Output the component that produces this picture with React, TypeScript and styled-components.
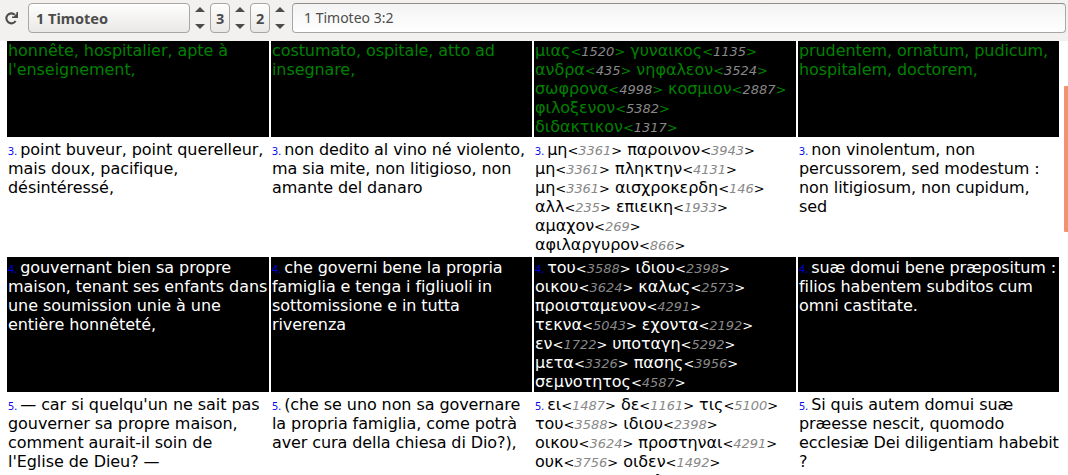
import React from 'react';
import styled, { createGlobalStyle } from 'styled-components';

const Global = createGlobalStyle`
  * { box-sizing: border-box; }
  html, body { margin: 0; height: 100%; overflow: hidden; background: #fff; }
`;

const Page = styled.div`
  height: 100vh;
  display: flex;
  flex-direction: column;
  overflow: hidden;
`;

const Toolbar = styled.header`
  flex: none;
  height: 41px;
  padding: 3px 2px 8px 4px;
  display: flex;
  align-items: stretch;
  background: #f2f1f0;
  color: #4c4c4c;
  font: 14px/28px 'Noto Sans', sans-serif;
`;

const Reload = styled.button`
  width: 16px;
  margin: 0 8px 0 0;
  padding: 0;
  border: 0;
  background: none;
  display: flex;
  align-items: center;
  svg { display: block; }
`;

const Control = styled.button<{ $width: number; $pad: number }>`
  width: ${(p) => p.$width}px;
  height: 30px;
  padding: 0 0 0 ${(p) => p.$pad}px;
  border: 1px solid #a9a6a3;
  border-radius: 4px;
  background: linear-gradient(#fefefe, #e9e8e6);
  color: #4c4c4c;
  font: bold 14.5px/27px 'Noto Sans', sans-serif;
  text-align: left;
  white-space: nowrap;
`;

const Stepper = styled.div`
  width: 20px;
  display: flex;
  flex-direction: column;
  align-items: center;
  justify-content: space-between;
  padding: 4px 0;
  svg { display: block; }
`;

const Field = styled.div`
  flex: 1;
  height: 30px;
  margin-left: 2px;
  padding-left: 11px;
  border: 1px solid #a9a6a3;
  border-top-color: #8f8d8b;
  border-radius: 4px;
  background: linear-gradient(#f3f3f3, #fff);
  line-height: 28px;
`;

const Reader = styled.main`
  flex: 1;
  min-height: 0;
  display: flex;
  justify-content: space-between;
  overflow: hidden;
`;

const Table = styled.div`
  width: 1052px;
  height: 435px;
  margin: -1px 0 0 7px;
  overflow: hidden;
  display: grid;
  grid-template-columns: 262px 261px 262px 261px;
  grid-auto-rows: max-content;
  gap: 2px;
`;

type Tone = 'current' | 'dark' | 'light';
const ink = { current: '#008000', dark: '#fff', light: '#000' };

const Cell = styled.div<{ $tone: Tone; $tracking: number }>`
  padding: 1px;
  background: ${(p) => (p.$tone === 'light' ? '#fff' : '#000')};
  color: ${(p) => ink[p.$tone]};
  font: 16px/19px 'DejaVu Sans', sans-serif;
  letter-spacing: ${(p) => p.$tracking}px;
  white-space: nowrap;
`;

const Line = styled.div`
  height: 19px;
`;

const VerseNumber = styled.span<{ $tone: Tone }>`
  color: ${(p) => (p.$tone === 'dark' ? '#0000c8' : '#0000ee')};
  font-family: 'Noto Sans', sans-serif;
  font-size: 10.5px;
  font-weight: ${(p) => (p.$tone === 'dark' ? 500 : 400)};
  line-height: 1;
  letter-spacing: 0.2px;
`;

const Strong = styled.span`
  font-size: 13px;
  line-height: 1;
  i { color: #888; }
`;

const ScrollTrack = styled.div`
  width: 4px;
  padding-top: 45px;
`;

const ScrollThumb = styled.div`
  height: 146px;
  border-radius: 1px 0 0 1px;
  background: #f39170;
`;

interface Verse {
  n?: number;
  tone: Tone;
  columns: string[][];
}

const tracking = [-0.06, -0.09, -0.03, -0.09];

const verses: Verse[] = [
  {
    tone: 'current',
    columns: [
      ['honnête, hospitalier, apte à', "l'enseignement,"],
      ['costumato, ospitale, atto ad', 'insegnare,'],
      ['μιας<1520> γυναικος<1135>', 'ανδρα<435> νηφαλεον<3524>', 'σωφρονα<4998> κοσμιον<2887>', 'φιλοξενον<5382>', 'διδακτικον<1317>'],
      ['prudentem, ornatum, pudicum,', 'hospitalem, doctorem,'],
    ],
  },
  {
    n: 3,
    tone: 'light',
    columns: [
      ['point buveur, point querelleur,', 'mais doux, pacifique,', 'désintéressé,'],
      ['non dedito al vino né violento,', 'ma sia mite, non litigioso, non', 'amante del danaro'],
      ['μη<3361> παροινον<3943>', 'μη<3361> πληκτην<4131>', 'μη<3361> αισχροκερδη<146>', 'αλλ<235> επιεικη<1933>', 'αμαχον<269>', 'αφιλαργυρον<866>'],
      ['non vinolentum, non', 'percussorem, sed modestum :', 'non litigiosum, non cupidum,', 'sed'],
    ],
  },
  {
    n: 4,
    tone: 'dark',
    columns: [
      ['gouvernant bien sa propre', 'maison, tenant ses enfants dans', 'une soumission unie à une', 'entière honnêteté,'],
      ['che governi bene la propria', 'famiglia e tenga i figliuoli in', 'sottomissione e in tutta', 'riverenza'],
      ['του<3588> ιδιου<2398>', 'οικου<3624> καλως<2573>', 'προισταμενον<4291>', 'τεκνα<5043> εχοντα<2192>', 'εν<1722> υποταγη<5292>', 'μετα<3326> πασης<3956>', 'σεμνοτητος<4587>'],
      ['suæ domui bene præpositum :', 'filios habentem subditos cum', 'omni castitate.'],
    ],
  },
  {
    n: 5,
    tone: 'light',
    columns: [
      ["— car si quelqu'un ne sait pas", 'gouverner sa propre maison,', 'comment aurait-il soin de', "l'Eglise de Dieu? —"],
      ['(che se uno non sa governare', 'la propria famiglia, come potrà', 'aver cura della chiesa di Dio?),'],
      ['ει<1487> δε<1161> τις<5100>', 'του<3588> ιδιου<2398>', 'οικου<3624> προστηναι<4291>', 'ουκ<3756> οιδεν<1492>', 'πως<4459> εκκλησιας<1577>'],
      ['Si quis autem domui suæ', 'præesse nescit, quomodo', 'ecclesiæ Dei diligentiam habebit', '?'],
    ],
  },
];

const withStrongs = (text: string) =>
  text.split(/(<\d+>)/).map((part, i) =>
    part.startsWith('<') ? (
      <Strong key={i}>&lt;<i>{part.slice(1, -1)}</i>&gt;</Strong>
    ) : (
      part
    ),
  );

const Arrows = () => (
  <Stepper>
    <svg width="10" height="5"><path d="M0 5 5 0l5 5z" fill="#4c4c4c" /></svg>
    <svg width="10" height="5"><path d="M0 0 5 5l5-5z" fill="#4c4c4c" /></svg>
  </Stepper>
);

export default function App() {
  return (
    <Page>
      <Global />
      <Toolbar>
        <Reload aria-label="Reload">
          <svg width="16" height="16" viewBox="0 0 16 16">
            <path d="M10.8 4.7A5 5 0 1 0 11.6 11" fill="none" stroke="#4c4c4c" strokeWidth="2.1" />
            <path d="M14 2V8H8V6.4H9.8L12.4 3.8V2z" fill="#4c4c4c" />
          </svg>
        </Reload>
        <Control $width={162} $pad={7}>1 Timoteo</Control>
        <Arrows />
        <Control $width={20} $pad={5}>3</Control>
        <Arrows />
        <Control $width={20} $pad={5}>2</Control>
        <Arrows />
        <Field>1 Timoteo 3:2</Field>
      </Toolbar>
      <Reader>
        <Table>
          {verses.map((verse, v) =>
            verse.columns.map((lines, c) => (
              <Cell key={`${v}-${c}`} $tone={verse.tone} $tracking={tracking[c]}>
                {lines.map((line, i) => (
                  <Line key={i}>
                    {i === 0 && verse.n && <VerseNumber $tone={verse.tone}>{verse.n}. </VerseNumber>}
                    {withStrongs(line)}
                  </Line>
                ))}
              </Cell>
            )),
          )}
        </Table>
        <ScrollTrack>
          <ScrollThumb />
        </ScrollTrack>
      </Reader>
    </Page>
  );
}
